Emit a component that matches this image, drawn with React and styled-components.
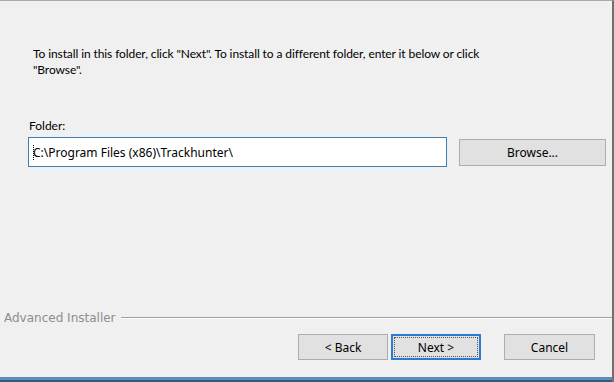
import styled, { createGlobalStyle } from "styled-components";

const Global = createGlobalStyle`
  html, body {
    margin: 0;
    padding: 0;
    background: #f0f0f0;
  }
  * {
    box-sizing: border-box;
  }
`;

const Window = styled.div`
  width: 614px;
  height: 382px;
  display: flex;
  flex-direction: column;
  background: #f0f0f0;
  border-top: 1px solid #a8a8a8;
  border-right: 2px solid #707070;
  font-family: "Segoe UI", Lato, "Noto Sans", sans-serif;
  font-size: 12px;
  color: #000;
  overflow: hidden;
`;

const Body = styled.div`
  flex: 1;
  display: flex;
  flex-direction: column;
  padding: 45px 0 0 28px;
`;

const Intro = styled.p`
  margin: 0 0 0 5px;
  line-height: 16px;
  letter-spacing: -0.1px;
`;

const Label = styled.div`
  margin-top: 40px;
  padding-left: 1px;
  line-height: 16px;
`;

const Row = styled.div`
  display: flex;
  align-items: center;
  gap: 12px;
  margin-top: 3px;
`;

const PathBox = styled.div`
  position: relative;
  width: 419px;
  height: 30px;
  background: #fff;
  border: 1px solid #3c7fb5;
  padding: 0 0 0 4px;
  display: flex;
  align-items: center;
  font-family: "Noto Sans", sans-serif;
  font-size: 12px;
`;

const Caret = styled.span`
  position: absolute;
  left: 4px;
  top: 7px;
  height: 15px;
  border-left: 1px dotted #000;
`;

const Button = styled.button`
  width: ${(p) => p.$w || 89}px;
  height: ${(p) => p.$h || 26}px;
  background: #e1e1e1;
  border: ${(p) => (p.$default ? "2px solid #2a7bd4" : "1px solid #adadad")};
  padding: 0;
  font-family: "Noto Sans", sans-serif;
  font-size: 12px;
  color: #000;
  display: flex;
  align-items: center;
  justify-content: center;
  position: relative;
`;

const Focus = styled.span`
  position: absolute;
  inset: 1px;
  border: 1px dotted #555;
`;

const Separator = styled.div`
  display: flex;
  align-items: center;
  gap: 5px;
  padding-left: 4px;
  color: #8d8d8d;
  font-family: "DejaVu Sans", "Noto Sans", sans-serif;
  font-size: 12px;
  height: 14px;
`;

const Rule = styled.div`
  flex: 1;
  border-top: 1px solid #a0a0a0;
  border-bottom: 1px solid #fff;
`;

const Footer = styled.div`
  display: flex;
  align-items: center;
  padding: 9px 0 17px 298px;
`;

const Spacer = styled.div`
  width: ${(p) => p.$w}px;
`;

const TaskBar = styled.div`
  height: 5px;
  background: linear-gradient(#5f8db3 0 3px, #2f5b80 3px);
`;

export default function App() {
  return (
    <>
      <Global />
      <Window>
        <Body>
          <Intro>
            To install in this folder, click "Next". To install to a different folder, enter it below or click
            <br />
            "Browse".
          </Intro>
          <Label>Folder:</Label>
          <Row>
            <PathBox>
              <Caret />
              C:\Program Files (x86)\Trackhunter\
            </PathBox>
            <Button $w={147} $h={27}>Browse...</Button>
          </Row>
        </Body>
        <Separator>
          Advanced Installer
          <Rule />
        </Separator>
        <Footer>
          <Button $w={90}>&lt; Back</Button>
          <Spacer $w={3} />
          <Button $w={90} $default>
            <Focus />
            Next &gt;
          </Button>
          <Spacer $w={23} />
          <Button $w={91}>Cancel</Button>
        </Footer>
        <TaskBar />
      </Window>
    </>
  );
}
